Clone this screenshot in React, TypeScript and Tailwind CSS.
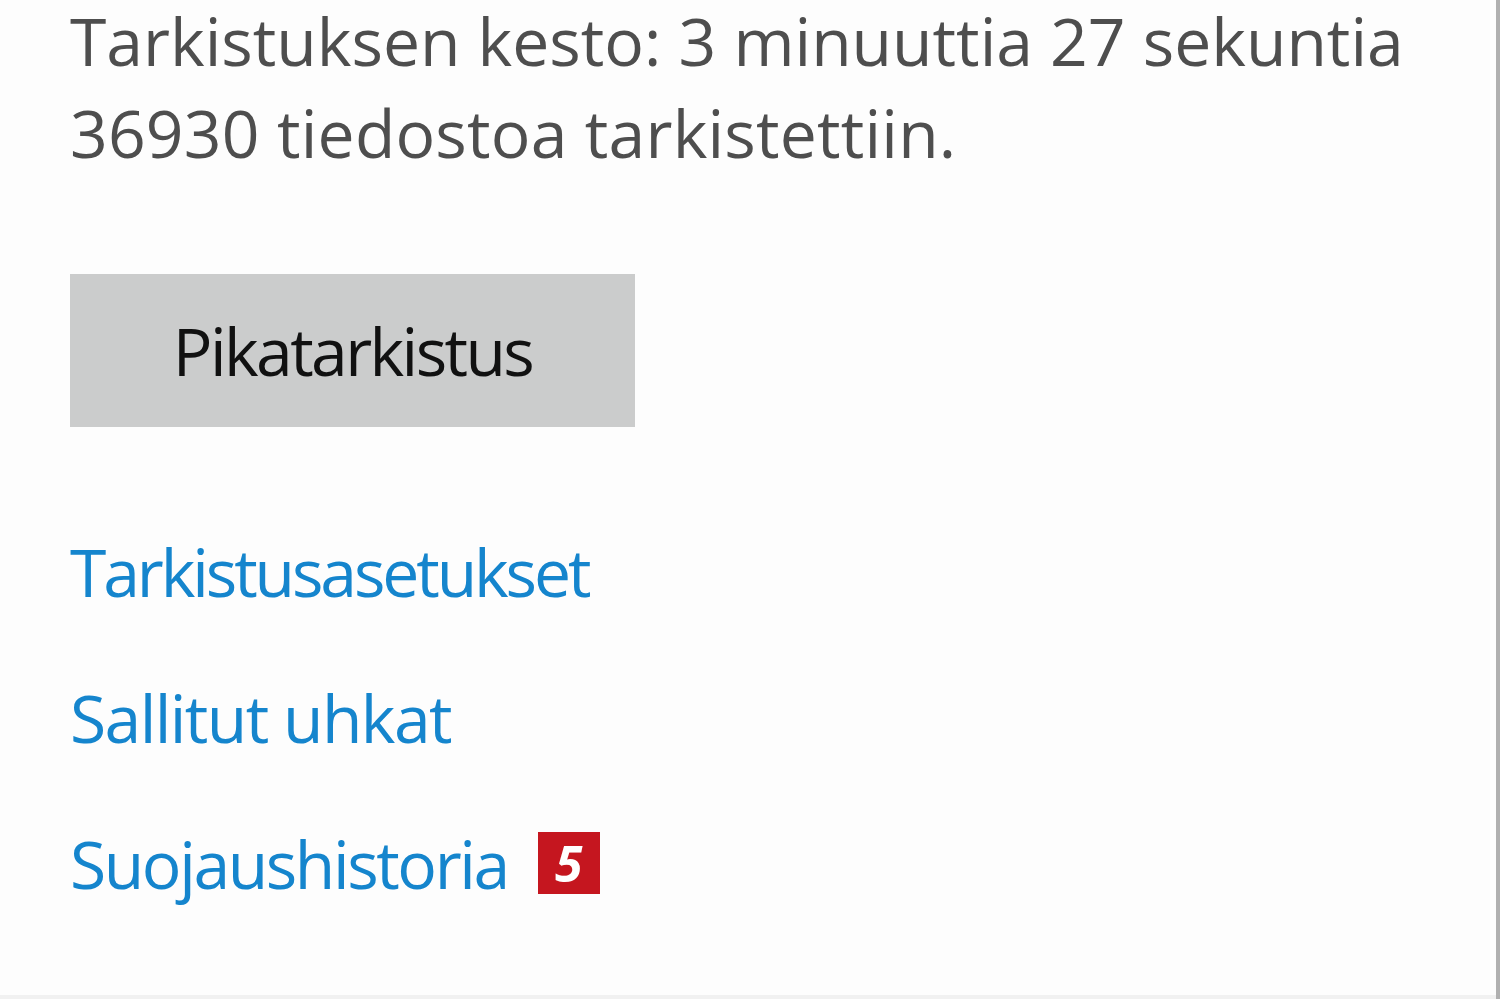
import React from "react";

const links = [
  { label: "Tarkistusasetukset", cls: "tracking-[-3.1px]" },
  { label: "Sallitut uhkat", cls: "tracking-[-1.6px]" },
  { label: "Suojaushistoria", cls: "tracking-[-2.4px]", badge: 5 },
];

const App = () => {
  return (
    <div
      className="flex h-[999px] w-[1500px] overflow-hidden bg-[#fdfdfd]"
      style={{ fontFamily: '"Open Sans", "Noto Sans", sans-serif' }}
    >
      <div className="flex flex-1 flex-col">
        <div className="flex flex-1 flex-col pl-[70px]">
          <div className="mt-[-6px] text-[66px] leading-[92px] text-[#4e4e4e]">
            <p>Tarkistuksen kesto: 3 minuuttia 27 sekuntia</p>
            <p className="tracking-[0.2px]">36930 tiedostoa tarkistettiin.</p>
          </div>
          <button className="mt-[96px] flex h-[153px] w-[565px] items-center justify-center bg-[#cbcccc] text-[66px] tracking-[-2.6px] text-[#111]">
            Pikatarkistus
          </button>
          <div className="mt-[96px] flex flex-col gap-[50px]">
            {links.map((l) => (
              <div key={l.label} className="flex items-center gap-[30px]">
                <span className={`text-[66px] leading-[96px] text-[#1585cd] ${l.cls}`}>{l.label}</span>
                {l.badge && (
                  <span className="flex h-[62px] w-[62px] items-center justify-center bg-[#c5161f] text-[50px] font-bold italic text-white">
                    {l.badge}
                  </span>
                )}
              </div>
            ))}
          </div>
        </div>
        <div className="h-[4px] bg-[#f1f1f1]" />
      </div>
      <div className="w-[4px] bg-[#b0b0b0]" />
    </div>
  );
};

export default App;
